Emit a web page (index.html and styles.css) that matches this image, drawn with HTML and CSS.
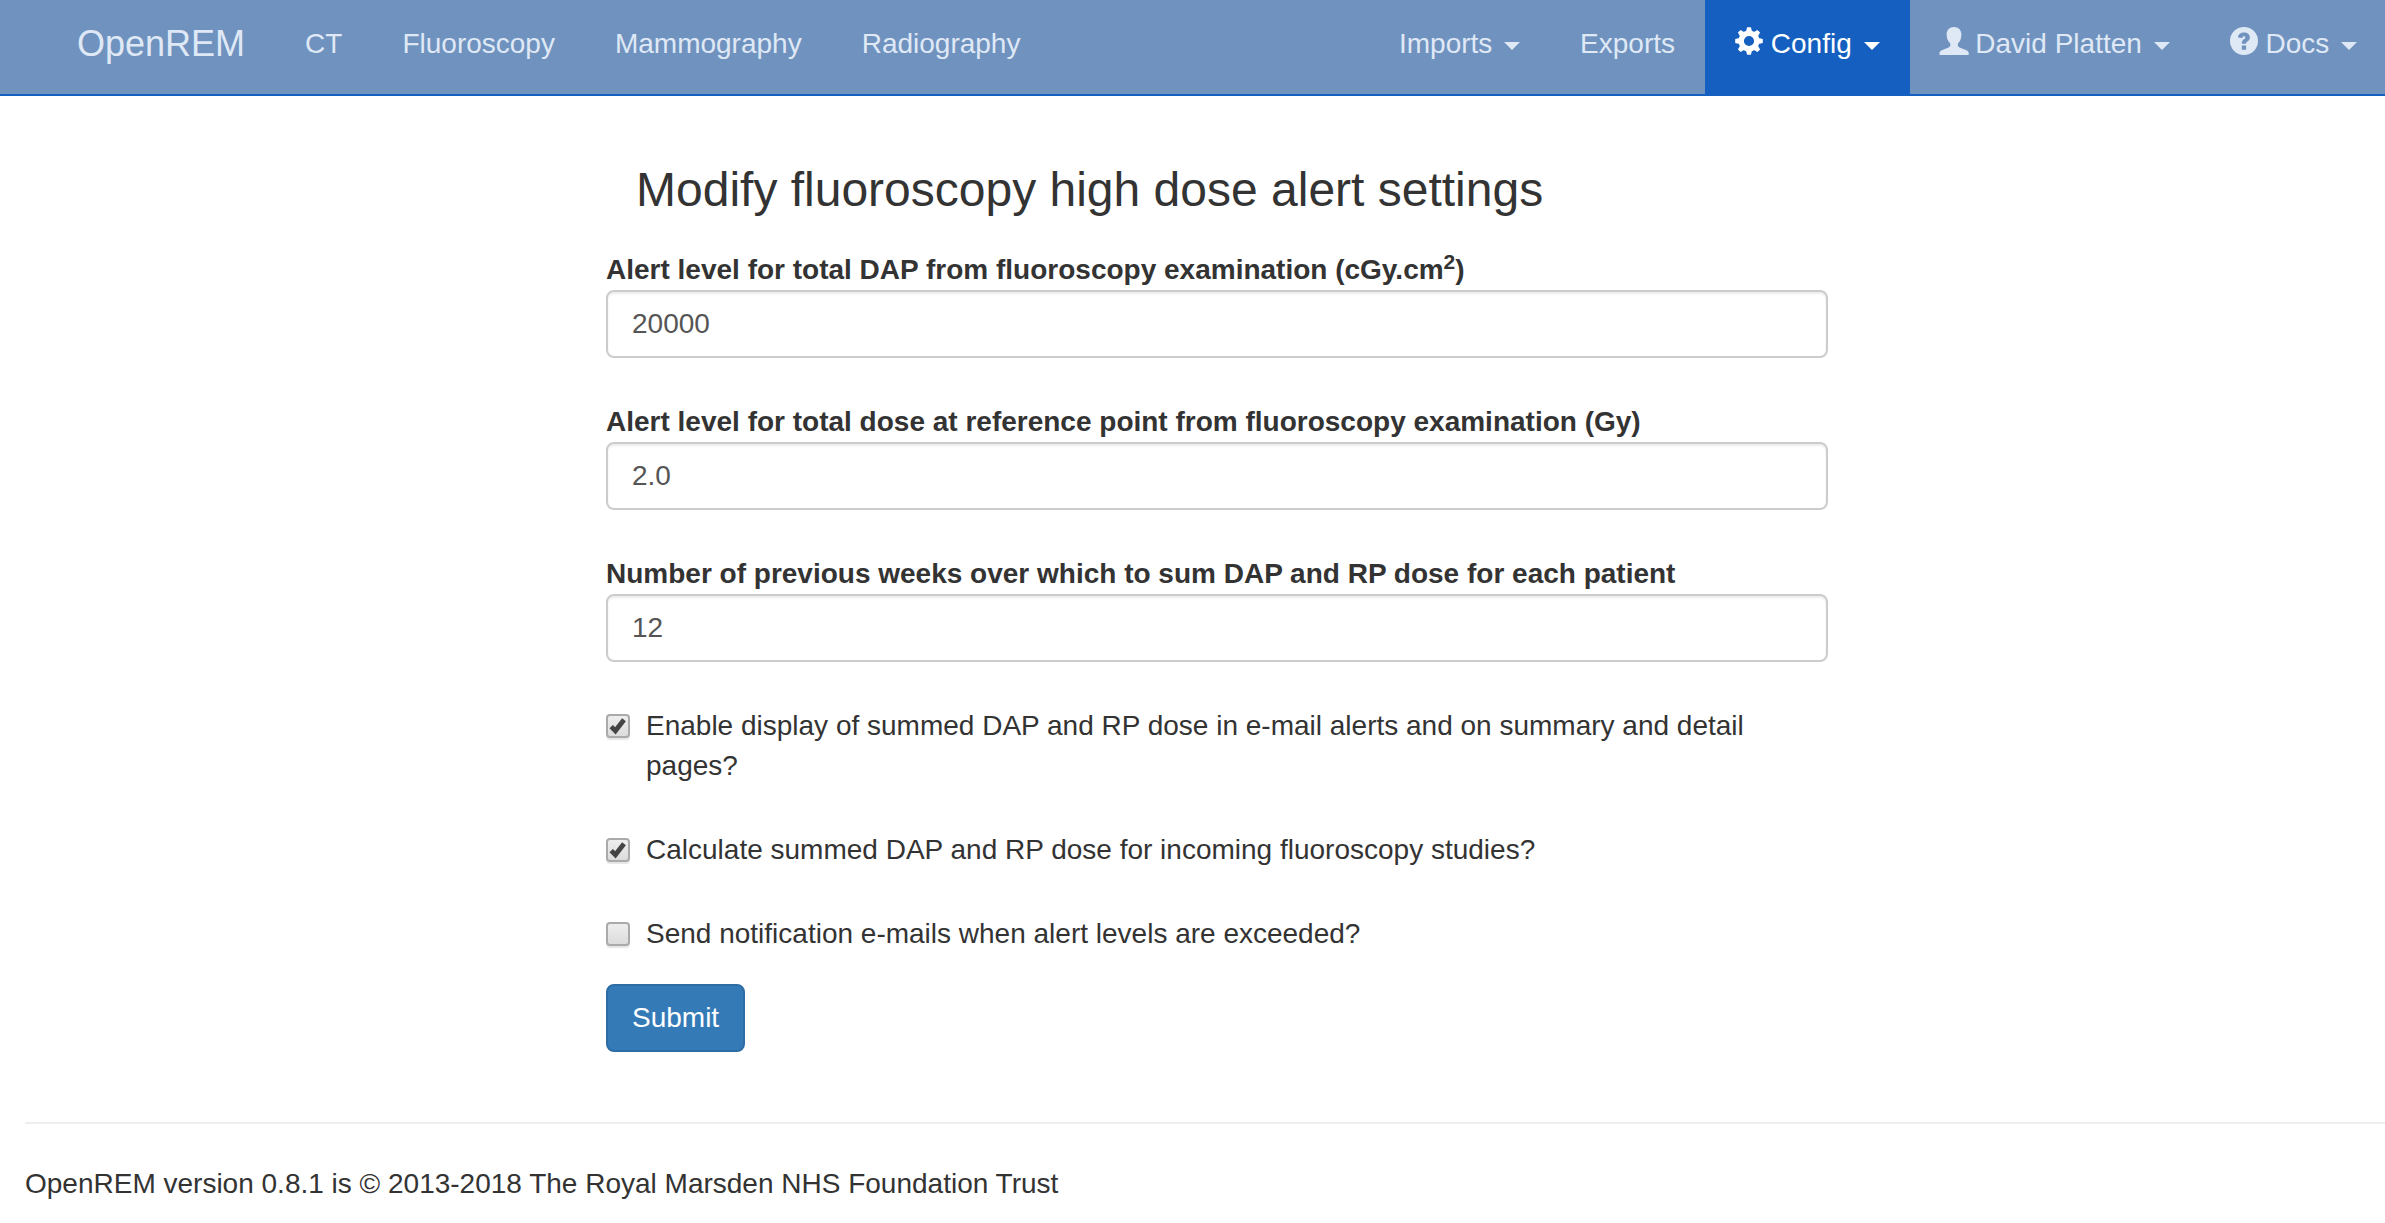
FILE: index.html
```html
<!DOCTYPE html>
<html lang="en">
<head>
<meta charset="utf-8">
<title>OpenREM</title>
<link rel="stylesheet" href="styles.css">
</head>
<body>
<nav class="navbar">
  <a class="brand">OpenREM</a>
  <a class="nav-item">CT</a>
  <a class="nav-item">Fluoroscopy</a>
  <a class="nav-item">Mammography</a>
  <a class="nav-item">Radiography</a>
  <div class="nav-right">
    <a class="nav-item">Imports <span class="caret"></span></a>
    <a class="nav-item">Exports</a>
    <a class="nav-item active"><svg class="icon" viewBox="-14 -14 28 28"><circle r="7.800" fill="none" stroke="currentColor" stroke-width="5.400"/><g fill="currentColor"><path id="tooth" d="M-3-9.500L-1.900-13.800H1.900L3-9.500z"/><use href="#tooth" transform="rotate(45)"/><use href="#tooth" transform="rotate(90)"/><use href="#tooth" transform="rotate(135)"/><use href="#tooth" transform="rotate(180)"/><use href="#tooth" transform="rotate(225)"/><use href="#tooth" transform="rotate(270)"/><use href="#tooth" transform="rotate(315)"/></g></svg> Config <span class="caret"></span></a>
    <a class="nav-item"><svg class="icon" viewBox="0 0 28 28"><path fill="currentColor" d="M14 0c4.500 0 7.400 3 7.400 7.500 0 3.800-1.300 7-3.500 9v1.800c0 1 .7 1.700 1.700 2.100l6.200 2.700c1.500.7 2.900 1.500 2.900 3.200V28H-.500v-1.700c0-1.700 1.400-2.500 2.900-3.200l6.200-2.700c1-.4 1.700-1.100 1.700-2.100v-1.800c-2.200-2-3.700-5.200-3.700-9C6.600 3 9.500 0 14 0z"/></svg> David Platten <span class="caret"></span></a>
    <a class="nav-item"><svg class="icon" viewBox="0 0 28 28"><path fill="currentColor" fill-rule="evenodd" d="M14 0a14 14 0 1 0 0 28 14 14 0 0 0 0-28zM8 10.500C8.200 7 10.700 5.500 14 5.500c3.400 0 5.800 1.700 5.800 4.700 0 2.600-1.300 3.600-2.700 4.600-.9.600-1 .8-1 2h-4.300c0-2.600.6-3.400 2-4.500 1-.8 1.500-1.100 1.500-1.900 0-.7-.5-1.100-1.300-1.100-1 0-1.500.5-1.600 1.600zM11.800 18.500h4.300v4.300h-4.300z"/></svg> Docs <span class="caret"></span></a>
  </div>
</nav>
<main class="content">
  <h1 class="title">Modify fluoroscopy high dose alert settings</h1>
  <form class="form">
    <div class="field">
      <label class="label" for="dap">Alert level for total DAP from fluoroscopy examination (cGy.cm<sup>2</sup>)</label>
      <input class="input" id="dap" type="text" value="20000">
    </div>
    <div class="field">
      <label class="label" for="rp">Alert level for total dose at reference point from fluoroscopy examination (Gy)</label>
      <input class="input" id="rp" type="text" value="2.0">
    </div>
    <div class="field">
      <label class="label" for="weeks">Number of previous weeks over which to sum DAP and RP dose for each patient</label>
      <input class="input" id="weeks" type="text" value="12">
    </div>
    <label class="check"><span class="box"><svg class="tick" viewBox="0 0 24 24"><path d="M5.200 12.600l4.200 4.200 8.600-11"/></svg></span><span>Enable display of summed DAP and RP dose in e-mail alerts and on summary and detail pages?</span></label>
    <label class="check"><span class="box"><svg class="tick" viewBox="0 0 24 24"><path d="M5.200 12.600l4.200 4.200 8.600-11"/></svg></span><span>Calculate summed DAP and RP dose for incoming fluoroscopy studies?</span></label>
    <label class="check"><span class="box"></span><span>Send notification e-mails when alert levels are exceeded?</span></label>
    <button class="submit" type="button">Submit</button>
  </form>
</main>
<footer class="footer">OpenREM version 0.8.1 is © 2013-2018 The Royal Marsden NHS Foundation Trust</footer>
</body>
</html>
```
FILE: styles.css
```css
* { box-sizing: border-box; }
body {
  margin: 0;
  overflow: hidden;
  background: #fff;
  color: #333;
  font: 28px/40px "Liberation Sans", Arial, sans-serif;
}
.navbar {
  display: flex;
  height: 96px;
  padding-left: 47px;
  background: #7092bf;
  border-bottom: 2px solid #145fbf;
  color: #dfe8f5;
}
.brand { padding: 24px 30px 0; font-size: 36px; }
.nav-item { padding: 24px 30px 0; white-space: nowrap; }
.nav-right { display: flex; margin-left: auto; margin-right: -2px; }
.active { background: #145fbf; color: #fff; }
.icon {
  width: 28px;
  height: 28px;
  overflow: visible;
  vertical-align: -2px;
}
.caret {
  display: inline-block;
  margin-left: 4px;
  vertical-align: middle;
  border-top: 8px solid;
  border-left: 8px solid transparent;
  border-right: 8px solid transparent;
}
.content { width: 1222px; margin: 67px 0 0 606px; }
.title { margin: 0 0 34px; padding-left: 30px; font-size: 48px; font-weight: 400; line-height: 53px; }
.form { display: flex; flex-direction: column; align-items: flex-start; }
.field { width: 100%; margin-bottom: 44px; }
.label { display: block; height: 40px; font-weight: 700; }
.label sup { position: relative; top: -0.5em; font-size: 75%; line-height: 0; vertical-align: baseline; }
.input {
  display: block;
  width: 100%;
  height: 68px;
  padding: 12px 24px;
  border: 2px solid #ccc;
  border-radius: 8px;
  background: #fff;
  box-shadow: inset 0 2px 2px rgba(0, 0, 0, .075);
  color: #555;
  font: inherit;
}
.check { display: flex; gap: 16px; margin-bottom: 44px; }
.box {
  flex: none;
  width: 24px;
  height: 24px;
  margin-top: 8px;
  border: 2px solid #aaa;
  border-radius: 4px;
  background: linear-gradient(#eee, #dcdcdc);
  box-shadow: 0 2px 1px rgba(0, 0, 0, .1);
}
.tick { display: block; width: 24px; height: 24px; margin: -2px; fill: none; stroke: #444; stroke-width: 4.8; }
.submit {
  height: 68px;
  margin-top: -14px;
  padding: 0 24px;
  border: 2px solid #2e6da4;
  border-radius: 8px;
  background: #337ab7;
  color: #fff;
  font: inherit;
}
.footer { margin: 70px 0 0 25px; padding-top: 40px; border-top: 2px solid #eee; }
```
